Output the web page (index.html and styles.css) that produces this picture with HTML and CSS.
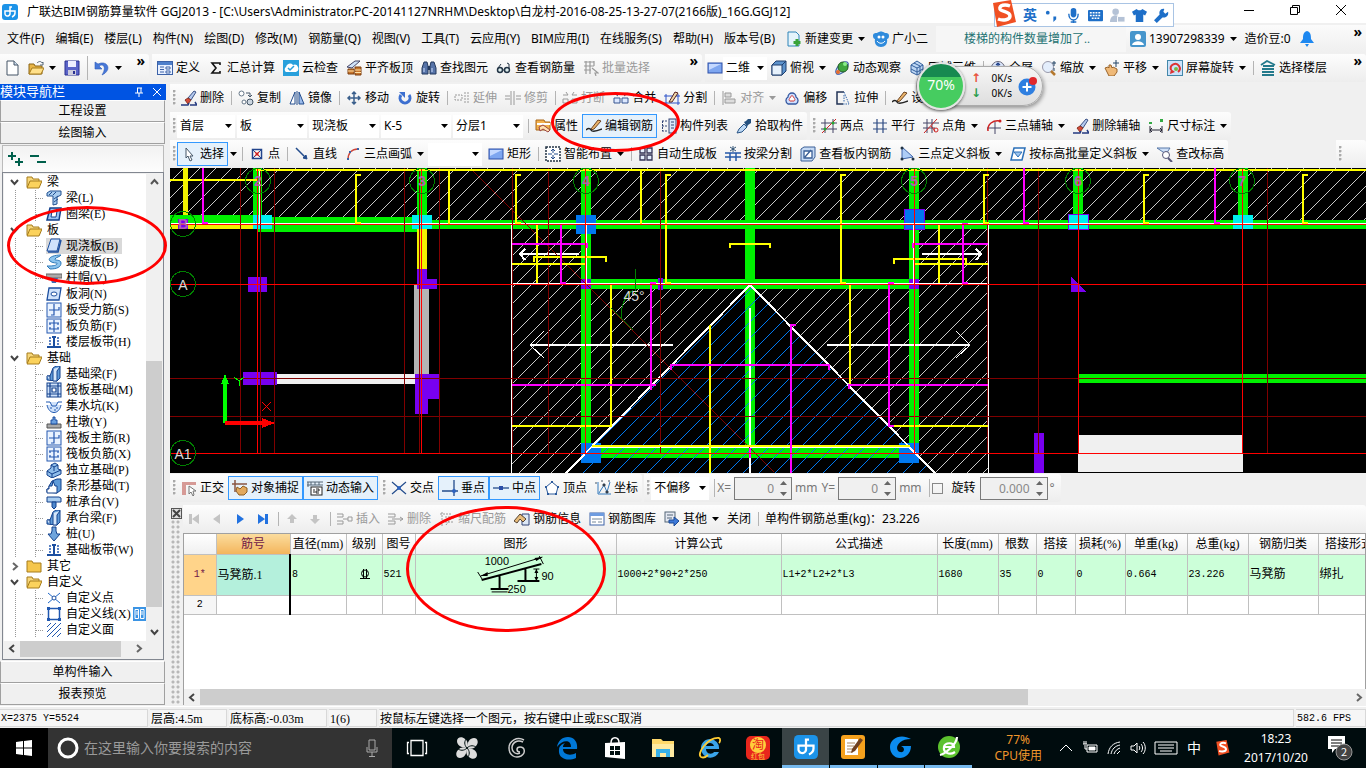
FILE: index.html
```html
<!DOCTYPE html>
<html lang="zh-CN">
<head>
  <meta charset="UTF-8" />
  <meta name="viewport" content="width=device-width, initial-scale=1.0" />
  <title>广联达BIM钢筋算量软件 GGJ2013</title>
  <link rel="stylesheet" href="styles.css">
</head>
<body>

  <!-- icon set -->
  <svg class="sprite" aria-hidden="true">
    <symbol id="logo" viewBox="0 0 16 16"><rect width="16" height="16" rx="3" fill="#1c93e8"/><path d="M10 3H8v7a2.500 2.500 0 0 1-5-1V7h10v2c0 2-1 3-3 4" fill="none" stroke="#fff" stroke-width="1.500"/></symbol>
    <symbol id="caret" viewBox="0 0 7 4"><path d="M0 0h7L3.500 4z" fill="currentColor"/></symbol>
    <symbol id="new" viewBox="0 0 16 16"><path d="M3 1h7l4 4v10H3z" fill="#fff" stroke="#456"/><path d="M10 1v4h4" fill="#cde" stroke="#456"/></symbol>
    <symbol id="open" viewBox="0 0 16 16"><path d="M1 4h5l1 2h7v8H1z" fill="#e8b547" stroke="#8a6516"/><path d="M1 14l3-6h12l-3 6z" fill="#ffe08a" stroke="#a67c1d"/><path d="M9 3c2-2 4-2 5 0l1-1v3h-3" fill="none" stroke="#567"/></symbol>
    <symbol id="save" viewBox="0 0 16 16"><path d="M1 1h14v14H1z" fill="#5a63c8" stroke="#2a3190"/><path d="M4 1h8v6H4z" fill="#eef"/><path d="M4 10h8v5H4z" fill="#ccd"/><path d="M9 11h2v3H9z" fill="#2a3190"/></symbol>
    <symbol id="undo" viewBox="0 0 16 16"><path d="M1 2v7h7L5 6c4-3 8 1 3 9 9-4 7-13-1-12L4 4z" fill="#4878d8" stroke="#2c5bb8" stroke-width=".6"/></symbol>
    <symbol id="define" viewBox="0 0 16 16"><rect x=".5" y="1.500" width="15" height="13" fill="#e8f0ff" stroke="#3c62a8"/><path d="M1 2h14v3H1z" fill="#4f80cc"/><path d="M3 7h4M3 9.500h4M3 12h4M9 7h4v2H9zM9 11h4v2H9z" stroke="#3c62a8" fill="#fff"/></symbol>
    <symbol id="sigma" viewBox="0 0 16 16"><path d="M12 5V3H4l4 5-4 5h8v-2" fill="none" stroke="#111" stroke-width="1.600"/></symbol>
    <symbol id="cloud" viewBox="0 0 16 16"><rect width="16" height="16" fill="#28a0dc"/><path d="M3 12a3 3 0 0 1 0-5 4 4 0 0 1 7-2 3.500 3.500 0 0 1 3 7z" fill="#fff"/><path d="M5 8l2 2 4-4" fill="none" stroke="#28a0dc" stroke-width="1.500"/></symbol>
    <symbol id="align-top" viewBox="0 0 16 16"><path d="M1 7l8-6h5l-8 7z" fill="#cfe2f8" stroke="#446"/><path d="M2 9h6v5H2zM9 7h6v8H9z" fill="#c8762d" stroke="#7c3f10"/><path d="M2 11h6M9 10h6M9 12.500h6" stroke="#ffe2a8"/></symbol>
    <symbol id="find" viewBox="0 0 16 16"><path d="M3 2h3l1 4v8H1V8zM10 2h3l2 6v6H9V6z" fill="#5673a8" stroke="#23395d"/><path d="M7 6h2v4H7z" fill="#23395d"/><path d="M3 8v4M11 8v4" stroke="#cfe0ff"/></symbol>
    <symbol id="glasses" viewBox="0 0 16 16"><circle cx="4" cy="10" r="2.500" fill="#dee" stroke="#234" stroke-width="1.500"/><circle cx="11" cy="10" r="2.500" fill="#dee" stroke="#234" stroke-width="1.500"/><path d="M2 8l3-4M7 10h1M13 9V4l-2-1" fill="none" stroke="#234"/></symbol>
    <symbol id="batch" viewBox="0 0 16 16"><path d="M1 2h10M1 6h10M1 10h7M3 1v13M7 1v13M11 1v5M9 8l6 5-3 0 1 3" fill="none" stroke="currentColor" stroke-width="1.200"/></symbol>
    <symbol id="rect" viewBox="0 0 16 16"><rect x="1" y="3" width="14" height="10" fill="#7ea6f0" stroke="#2c4fa8"/><path d="M2 4h12L2 10z" fill="#c4d8ff"/></symbol>
    <symbol id="cube" viewBox="0 0 16 16"><path d="M1 5l4-4h10v10l-4 4H1z" fill="#5c92cc" stroke="#1d3d6c"/><path d="M1 5h10v10H1z" fill="#e6f1fc" stroke="#1d3d6c"/><path d="M11 5l4-4" stroke="#1d3d6c"/></symbol>
    <symbol id="orbit" viewBox="0 0 16 16"><ellipse cx="8" cy="8" rx="4" ry="8" transform="rotate(45 8 8)" fill="#b8cbe8" stroke="#3358a8"/><circle cx="9" cy="7" r="5" fill="#3fa63f" stroke="#245c24"/><circle cx="11" cy="4" r="2" fill="#8e8"/><circle cx="4" cy="12" r="2" fill="#e66b2c"/></symbol>
    <symbol id="globe" viewBox="0 0 16 16"><path d="M2 5l6-4 6 4v7l-6 3-6-3z" fill="#bcd6f4" stroke="#335f9c"/><path d="M2 5l6 3 6-3M8 8v7M5 3l6 3v7M2 9l6 3 6-3" fill="none" stroke="#335f9c"/></symbol>
    <symbol id="full" viewBox="0 0 16 16"><circle cx="8" cy="8" r="6.500" fill="#dfeaff" stroke="#667"/><path d="M8 3v10M3 8h10M6 5l2-2 2 2M6 11l2 2 2-2" fill="none" stroke="#23448c" stroke-width="1.200"/></symbol>
    <symbol id="zoom" viewBox="0 0 16 16"><circle cx="7" cy="7" r="5.500" fill="#e4eefc" stroke="#99a"/><path d="M10 11l4 4" stroke="#b5782e" stroke-width="2.500"/><path d="M13 1v5M11 3h4M13 8v3" stroke="#246"/></symbol>
    <symbol id="hand" viewBox="0 0 16 16"><path d="M1 8l3-1 1 1V5l2 0 1 3 1-1 2 1 2 1v3l-3 4H5z" fill="#efb978" stroke="#9a642a"/><path d="M12 0v7M9 3h6" stroke="#246"/></symbol>
    <symbol id="screen-rot" viewBox="0 0 16 16"><rect x=".5" y=".5" width="15" height="15" fill="#cce3fb" stroke="#48a"/><path d="M4 10a4.500 4.500 0 1 1 7 2" fill="none" stroke="#d33" stroke-width="2"/><path d="M3 14l1-5 4 3z" fill="#d33"/><circle cx="9" cy="9" r="2" fill="#7b4"/></symbol>
    <symbol id="floors" viewBox="0 0 16 16"><path d="M1 5l6-4 8 4M3 6h11M2 9h12M2 12h12M2 15h12" fill="none" stroke="#247a8c" stroke-width="1.800"/></symbol>
    <symbol id="erase" viewBox="0 0 16 16"><path d="M7 8l6-7 2 1-5 8z" fill="#b4c9ee" stroke="#3b5185"/><path d="M4 10l3-2 3 2-3 4z" fill="#d64b3a" stroke="#832"/><path d="M0 15h7l1-2M9 15h7l-2-3" fill="none" stroke="#243a80" stroke-width="1.500"/></symbol>
    <symbol id="copy" viewBox="0 0 16 16"><circle cx="3.500" cy="3.500" r="2.500" fill="#fff" stroke="#678"/><circle cx="12" cy="12" r="3" fill="#ccd6e0" stroke="#456"/><circle cx="6" cy="12" r="2" fill="#fff" stroke="#678"/><path d="M8 3h4v3M10 5l2 2 2-2" fill="none" stroke="#456"/></symbol>
    <symbol id="mirror" viewBox="0 0 16 16"><path d="M6 2v12H1z" fill="#fff" stroke="#234c8c"/><path d="M8 1v14" stroke="#234c8c"/><path d="M10 2v12h5z" fill="#9cbcec" stroke="#234c8c"/></symbol>
    <symbol id="move" viewBox="0 0 16 16"><path d="M8 2v12M2 8h12M6 4l2-2 2 2M6 12l2 2 2-2M4 6L2 8l2 2M12 6l2 2-2 2" fill="none" stroke="#3a5f8c" stroke-width="1.500"/></symbol>
    <symbol id="rotate" viewBox="0 0 16 16"><path d="M4 5a5 5 0 1 0 8 0" fill="none" stroke="#3c6fd0" stroke-width="3"/><path d="M2 2h6v6z" fill="#3c6fd0"/></symbol>
    <symbol id="extend" viewBox="0 0 16 16"><path d="M1 5h7v5H1zM11 2v12M14 2v12" fill="none" stroke="currentColor" stroke-dasharray="2 1"/></symbol>
    <symbol id="trim" viewBox="0 0 16 16"><path d="M6 1v14M9 1v14M0 6h5M0 9h5M11 6h5M11 9h5" fill="none" stroke="currentColor"/></symbol>
    <symbol id="break" viewBox="0 0 16 16"><path d="M1 5h5l-2-3M15 5h-5l2-3M1 9h5v4H1zM10 9h5v4h-5z" fill="none" stroke="currentColor"/></symbol>
    <symbol id="merge" viewBox="0 0 16 16"><path d="M1 3l4 3M15 3l-4 3M1 8h6v5H1zM9 8h6v5H9z" fill="#dce8ff" stroke="#36558f"/></symbol>
    <symbol id="split" viewBox="0 0 16 16"><path d="M0 6h16M0 13h16M2 4v11M14 4v11" fill="none" stroke="#2d52c8"/><path d="M5 12l6-10 3 1-6 9z" fill="#f0d8a8" stroke="#522"/></symbol>
    <symbol id="align" viewBox="0 0 16 16"><path d="M2 1v14M4 3h6v4H4zM4 9h10v4H4z" fill="#ddd" stroke="currentColor"/></symbol>
    <symbol id="offset" viewBox="0 0 16 16"><path d="M4 14a4 4 0 0 1 0-7 4 4 0 0 1 8 0 4 4 0 0 1 0 7z" fill="#cfe0ff" stroke="#3558a0" stroke-width="1.300"/><path d="M6 11c-2-1 0-3 0-3 1-3 3-3 4 0 0 0 2 2 0 3z" fill="#fff" stroke="#c33"/></symbol>
    <symbol id="stretch" viewBox="0 0 16 16"><path d="M9 2H2v12h6" fill="none" stroke="#235" stroke-width="1.500"/><path d="M9 2l5 12H8M9 5v7" fill="none" stroke="#36a" stroke-dasharray="1.500 1"/></symbol>
    <symbol id="pen" viewBox="0 0 16 16"><path d="M5 11l7-9 3 1-7 8-3 1z" fill="#e9b36a" stroke="#6b4322"/><path d="M0 12c2-2 4-2 5 0s6 1 11-1" fill="none" stroke="#222" stroke-width="1.500"/></symbol>
    <symbol id="prop" viewBox="0 0 16 16"><path d="M1 2h8l1 2h5v8H1z" fill="#f3b14c" stroke="#a8671b"/><path d="M2 6h13" stroke="#fff" stroke-width="2"/><path d="M4 9l4-2 3 2 4 3-2 2-5-3-3 2z" fill="#ffdfae" stroke="#944"/></symbol>
    <symbol id="list" viewBox="0 0 16 16"><path d="M1 3h5M1 8h5M1 13h5M1.500 3v10" stroke="#347" stroke-dasharray="2 1"/><rect x="8" y="1" width="7" height="14" fill="#dbe8fb" stroke="#347"/><path d="M10 4h3M10 7h3M10 10h3" stroke="#347"/></symbol>
    <symbol id="pick" viewBox="0 0 16 16"><path d="M1 15l2-4 5-5 3 3-5 5z" fill="#bcd8f4" stroke="#2a5586"/><path d="M8 4l2-1 2-2h3v4l-3 2-1 2z" fill="#24507e"/></symbol>
    <symbol id="axis-two" viewBox="0 0 16 16"><path d="M4 1v14M12 1v14M0 5h16M0 11h16" stroke="#446"/><path d="M1 15L15 1" stroke="#c22"/><circle cx="4" cy="11" r="1.500" fill="#2a3"/><circle cx="12" cy="5" r="1.500" fill="#2a3"/></symbol>
    <symbol id="axis-par" viewBox="0 0 16 16"><path d="M5 1v14M11 1v14M1 5h14M1 11h14" stroke="#2d4a82" stroke-width="1.200"/></symbol>
    <symbol id="axis-ang" viewBox="0 0 16 16"><path d="M4 1v14M9 1v14M0 5h16M0 10h12" stroke="#446"/><path d="M1 15L14 1M8 8l4 5" stroke="#c22"/><circle cx="13" cy="12" r="2" fill="none" stroke="#c22"/></symbol>
    <symbol id="axis-3" viewBox="0 0 16 16"><path d="M9 4v12M1 10h14" stroke="#446"/><path d="M2 13C1 6 7 2 14 3" fill="none" stroke="#c22" stroke-width="1.500"/><circle cx="14" cy="3" r="1.500" fill="#c22"/></symbol>
    <symbol id="dim" viewBox="0 0 16 16"><path d="M2 8v7M14 8v7M2 12h12M4 10l-2 2 2 2M12 10l2 2-2 2" fill="none" stroke="#223"/><path d="M1 4h3v2H1zM12 1h3v3h-3z" fill="#3a4"/></symbol>
    <symbol id="cursor" viewBox="0 0 16 16"><path d="M5 2v10l2-2 2 5 2-1-2-4h3z" fill="#fff" stroke="#456"/></symbol>
    <symbol id="point" viewBox="0 0 16 16"><rect x="3.500" y="3.500" width="9" height="9" fill="#fff" stroke="#23448c" stroke-width="1.500"/><path d="M4 4l8 8M12 4l-8 8" stroke="#23448c"/><path d="M6 6l4 4M10 6l-4 4" stroke="#c22" stroke-width="1.500"/></symbol>
    <symbol id="line" viewBox="0 0 16 16"><path d="M2 2l10 10" stroke="#234c8c" stroke-width="1.500"/><path d="M13 13l-4-1 3-3z" fill="#234c8c" stroke="#234c8c"/></symbol>
    <symbol id="arc" viewBox="0 0 16 16"><path d="M3 14C3 7 7 3 13 3" fill="none" stroke="#cc4438" stroke-width="1.500"/><path d="M2 12h2v2H2zM12 2h2v2h-2zM4 5h2v2H4z" fill="#3c62a8"/></symbol>
    <symbol id="smart" viewBox="0 0 16 16"><rect x="1" y="1" width="14" height="14" fill="#fff" stroke="#234" stroke-width="1.500" stroke-dasharray="2 1"/><path d="M8 3v4M8 9v4M3 8h4M9 8h4M6 5l2-2 2 2M6 11l2 2 2-2" fill="none" stroke="#234c8c"/></symbol>
    <symbol id="auto" viewBox="0 0 16 16"><path d="M2 2h5v5H2zM9 2h5v5H9zM2 9h5v5H2zM9 9h5v5H9z" fill="#e4eefc" stroke="#335" stroke-width="1.300"/></symbol>
    <symbol id="beam-split" viewBox="0 0 16 16"><path d="M0 7h16M0 11h16M5 7v8M11 7v8" stroke="#2458a8" stroke-width="1.500"/><path d="M5 1l6 4M11 1L5 5M8 0v6" stroke="#357"/></symbol>
    <symbol id="see-bar" viewBox="0 0 16 16"><path d="M1 3l3-2h11v10l-3 4H1z" fill="#c6daf4" stroke="#3a5f96"/><path d="M4 5h8v7H4zM5 11l6-7" fill="#fff" stroke="#3a5f96" stroke-width="1.300"/></symbol>
    <symbol id="slope" viewBox="0 0 16 16"><path d="M3 1v12l11-2z" fill="#aecdf6" stroke="#3c62a8"/><circle cx="3" cy="2" r="1.500" fill="#234"/><circle cx="3" cy="13" r="1.500" fill="#234"/><circle cx="14" cy="13" r="1.500" fill="#234"/></symbol>
    <symbol id="level" viewBox="0 0 16 16"><path d="M4 2h11l-3 12H1z" fill="#fff" stroke="#2a6fb8" stroke-width="1.500"/><path d="M4 6h8l-4 5z" fill="#9cc4ee" stroke="#2a6fb8"/></symbol>
    <symbol id="level-find" viewBox="0 0 16 16"><path d="M0 2h13l-4 6z" fill="#cfe0f8" stroke="#5878a8"/><circle cx="9" cy="9" r="3.500" fill="#fff" stroke="#557"/><path d="M11 12l4 4" stroke="#557" stroke-width="2"/></symbol>
    <symbol id="ortho" viewBox="0 0 16 16"><path d="M1 2h14v3H5v10H1z" fill="#d69a96"/><path d="M8 6v8l2-2 2 4 1-1-1-4h3z" fill="#fff" stroke="#777"/></symbol>
    <symbol id="snap" viewBox="0 0 16 16"><path d="M3 0v12M0 4h15" stroke="#854" stroke-width="1.500"/><path d="M5 7l3 2 3-3 4 2v4l-3 3H7l-3-4z" fill="#e2a95d" stroke="#8b5c24"/></symbol>
    <symbol id="dyn" viewBox="0 0 16 16"><path d="M0 2h16M0 5h16M1 2v5M4 2v3M8 2v3M12 2v3" stroke="#567"/><rect x="4" y="7" width="11" height="8" fill="#fff" stroke="#222"/><path d="M7 9v4M9 9h3v2H9v2h3" fill="none" stroke="#222"/></symbol>
    <symbol id="cross" viewBox="0 0 16 16"><path d="M1 2l14 12M15 2L1 14" stroke="#234c8c" stroke-width="1.200"/><circle cx="8" cy="8" r="2" fill="#2c62c0"/></symbol>
    <symbol id="perp" viewBox="0 0 16 16"><path d="M0 11h16M12 0v16" stroke="#234c8c" stroke-width="1.300"/><circle cx="12" cy="11" r="2" fill="#2c62c0"/></symbol>
    <symbol id="mid" viewBox="0 0 16 16"><path d="M0 8h16" stroke="#234c8c" stroke-width="1.300"/><path d="M6 6h4v4H6z" fill="#2c4fa8"/></symbol>
    <symbol id="penta" viewBox="0 0 16 16"><path d="M8 2l6 5-2 7H4L2 7z" fill="#fff" stroke="#2c5a9c"/><path d="M7 1h2v2H7zM13 6h2v2h-2zM11 13h2v2h-2zM3 13h2v2H3zM1 6h2v2H1z" fill="#2c5a9c"/></symbol>
    <symbol id="coord" viewBox="0 0 16 16"><path d="M3 2v12h13M4 13l5-8 3 7 3-10" fill="none" stroke="#357abd"/><path d="M0 3h2M6 1h2M13 1h2M8 4h2v2H8zM11 11h2v2h-2z" stroke="#456"/></symbol>
    <symbol id="first" viewBox="0 0 16 16"><path d="M3 3h3v10H3zM13 3v10L6 8z" fill="currentColor"/></symbol>
    <symbol id="prev" viewBox="0 0 16 16"><path d="M11 3v10L4 8z" fill="currentColor"/></symbol>
    <symbol id="next" viewBox="0 0 16 16"><path d="M5 3v10l7-5z" fill="#2272e0"/></symbol>
    <symbol id="last" viewBox="0 0 16 16"><path d="M10 3h3v10h-3zM3 3v10l7-5z" fill="#2272e0"/></symbol>
    <symbol id="up" viewBox="0 0 16 16"><path d="M8 3l5 5h-3v4H6V8H3z" fill="currentColor"/></symbol>
    <symbol id="down" viewBox="0 0 16 16"><path d="M8 13l5-5h-3V4H6v4H3z" fill="currentColor"/></symbol>
    <symbol id="row-ins" viewBox="0 0 16 16"><path d="M0 3h6v3H0M0 10h6v3H0M15 6h-4v4h4zM11 8H6" fill="none" stroke="currentColor"/></symbol>
    <symbol id="row-del" viewBox="0 0 16 16"><path d="M0 3h7v3H0M0 10h7v3H0M4 8h11M12 6l3 2-3 2" fill="none" stroke="currentColor"/></symbol>
    <symbol id="scale" viewBox="0 0 16 16"><path d="M1 3h12M3 1v14M6 6h8v2M7 14l6-8M6 11h9" fill="none" stroke="currentColor" stroke-dasharray="2 1"/></symbol>
    <symbol id="info" viewBox="0 0 16 16"><path d="M8 3h7v11H8z" fill="#dde8f6" stroke="#347"/><path d="M0 10l6-7 6 5-3 3-3-3-3 4z" fill="#e8bc7a" stroke="#543"/></symbol>
    <symbol id="gallery" viewBox="0 0 16 16"><rect x="1" y="2" width="14" height="12" fill="#fff" stroke="#3c62a8"/><path d="M1 2h14v3H1z" fill="#6f9ce0"/><path d="M3 8h10M3 11h4M9 11h4" stroke="#789"/></symbol>
    <symbol id="other" viewBox="0 0 16 16"><rect x="1" y="1" width="10" height="10" fill="#e5e9f2" stroke="#567"/><path d="M3 4h6M3 7h5" stroke="#567"/><path d="M5 9h5V6l5 4-5 5v-3H5z" fill="#3c78d8" stroke="#1c4a94"/></symbol>
    <symbol id="doc-plus" viewBox="0 0 16 16"><path d="M2 1h8l3 3v11H2z" fill="#e4f3fb" stroke="#2f84b8"/><path d="M11 8v7M7.500 11.500h7" stroke="#39a339" stroke-width="3"/></symbol>
    <symbol id="mascot" viewBox="0 0 16 16"><path d="M0 5c0-3 2-3 4-3 3-2 5-2 8 0 2 0 4 0 4 3 0 2-1 3-2 3 1 5-2 8-6 8s-7-3-6-8C1 8 0 7 0 5z" fill="#2f8bdc"/><circle cx="6" cy="6" r="1.500" fill="#fff"/><circle cx="10" cy="6" r="1.500" fill="#fff"/><path d="M4 10c2 3 6 3 8 0" fill="none" stroke="#fff"/></symbol>
    <symbol id="user" viewBox="0 0 16 16"><rect width="16" height="16" rx="2" fill="#4796cc"/><circle cx="8" cy="6" r="3" fill="#fff"/><path d="M2 14c1-5 11-5 12 0z" fill="#fff"/></symbol>
    <symbol id="bell" viewBox="0 0 16 16"><path d="M8 0c4 1 4 5 4 8l3 4H1l3-4c0-3 0-7 4-8z" fill="#1e88f0"/><path d="M6 13h4l-2 3z" fill="#1e88f0"/></symbol>
    <!-- tree icons -->
    <symbol id="chev-d" viewBox="0 0 9 9"><path d="M1 2l3.500 4L8 2" fill="none" stroke="#444" stroke-width="2"/></symbol>
    <symbol id="chev-u" viewBox="0 0 9 9"><path d="M1 7l3.500-4L8 7" fill="none" stroke="#555" stroke-width="2"/></symbol>
    <symbol id="chev-r" viewBox="0 0 9 9"><path d="M3 1l4 3.500L3 8" fill="none" stroke="#666" stroke-width="2"/></symbol>
    <symbol id="chev-l" viewBox="0 0 9 9"><path d="M6 1L2 4.500 6 8" fill="none" stroke="#444" stroke-width="2"/></symbol>
    <symbol id="folder" viewBox="0 0 16 16"><path d="M1 3h5l1 2h8v9H1z" fill="#f5c64c" stroke="#a67c1d"/></symbol>
    <symbol id="folder-open" viewBox="0 0 16 16"><path d="M1 3h5l1 2h6v8H1z" fill="#f7d77a" stroke="#a67c1d"/><path d="M1 14l3-7h12l-3 7z" fill="#fbd25c" stroke="#a67c1d"/></symbol>
    <symbol id="t-beam" viewBox="0 0 16 16"><path d="M1 3l3-2h11v4l-4 2v7l-4 1V6H1z" fill="#a9cdf0" stroke="#205090"/><path d="M3 5l3-3M7 5l3-3M8 9l4-3M8 12l4-3" stroke="#205090"/></symbol>
    <symbol id="t-ring" viewBox="0 0 16 16"><path d="M4 2h11l-2 12H1z" fill="#9cc4f4" stroke="#12408c" stroke-width="1.500"/><path d="M6 5h5l-1 6H5z" fill="#fff" stroke="#12408c"/></symbol>
    <symbol id="t-slab" viewBox="0 0 16 16"><path d="M5 1h9l-3 12H1z" fill="#cfe2fb" stroke="#1c4fa0"/><path d="M2 14h10l3-12" fill="none" stroke="#1c4fa0" stroke-width="1.500"/></symbol>
    <symbol id="t-spiral" viewBox="0 0 16 16"><path d="M15 1C7 1 1 4 4 7s8 1 7 3-6 2-10 2l3 3c7 0 11-2 11-6S8 7 9 5s5-2 6-4z" fill="#8cc4ee" stroke="#2b77b8"/></symbol>
    <symbol id="t-cap" viewBox="0 0 16 16"><path d="M0 4h16v4H0z" fill="#aaa" stroke="#666"/><path d="M4 8h8l-2 5H6z" fill="#3b6fb8"/></symbol>
    <symbol id="t-hole" viewBox="0 0 16 16"><path d="M3 2h12l-2 12H1z" fill="#cfe2fb" stroke="#1c4fa0" stroke-width="1.300"/><ellipse cx="8" cy="8" rx="3" ry="2" fill="#fff" stroke="#1c4fa0"/></symbol>
    <symbol id="t-main" viewBox="0 0 16 16"><rect x="1" y="1" width="14" height="14" fill="#eaf3ff" stroke="#2558b0"/><path d="M8 2v11H5M3 8h10V5" fill="none" stroke="#2558b0" stroke-width="1.200"/></symbol>
    <symbol id="t-neg" viewBox="0 0 16 16"><rect x="1" y="1" width="14" height="14" fill="#eaf3ff" stroke="#2558b0"/><path d="M3 5h10M3 11h10M8 2v12M4 5v2M12 5v2M4 11V9M12 11V9" fill="none" stroke="#2558b0" stroke-width="1.200"/></symbol>
    <symbol id="t-band" viewBox="0 0 16 16"><path d="M4 3v9M12 3v9" stroke="#2558b0" stroke-width="1.500" stroke-dasharray="2 1"/><path d="M8 3v9M6 3h4M1 13h14" stroke="#1c4fa0" stroke-width="2"/></symbol>
    <symbol id="t-fbeam" viewBox="0 0 16 16"><path d="M1 14v-4h3l3-8 3-2h4v12l-3 3z" fill="#5f9bd8" stroke="#12408c"/><path d="M1 10h3v5M7 3v12h4V5l3-4" fill="#d5e7fa" stroke="#12408c"/></symbol>
    <symbol id="t-raft" viewBox="0 0 16 16"><rect x="1" y="1" width="14" height="14" fill="#cfe2fb" stroke="#12408c"/><path d="M4 1v14M12 1v14M1 4h14M1 12h14M6 6h4v4H6z" fill="#fff" stroke="#12408c" stroke-width="1.200"/></symbol>
    <symbol id="t-pit" viewBox="0 0 16 16"><path d="M0 4h4l2 4h4l2-4h4M1 7c2 10 12 10 14 0" fill="#cfe2fb" stroke="#2058b0"/><path d="M4 10h2M8 12h2M10 10h2" stroke="#2058b0"/></symbol>
    <symbol id="t-pier" viewBox="0 0 16 16"><path d="M1 10h14v4H1z" fill="#aaa" stroke="#555"/><path d="M5 10V6h2V3h2v3h2v4z" fill="#6aa0e0" stroke="#1c4fa0"/></symbol>
    <symbol id="t-iso" viewBox="0 0 16 16"><path d="M1 9l4-3V3l4-2 3 2v4l3 1v4l-9 4-5-3z" fill="#8fbdea" stroke="#12408c"/><path d="M1 9l5 3 9-4M6 12v4M5 3l3 2 4-2M8 5v4" fill="none" stroke="#12408c"/></symbol>
    <symbol id="t-strip" viewBox="0 0 16 16"><path d="M1 14v-3h2V8l3-5 5-2h4v11l-4 3z" fill="#5f9bd8" stroke="#12408c"/><path d="M1 15v-4h2V8h3l1-5 2 5h2v7z" fill="#fff" stroke="#12408c"/></symbol>
    <symbol id="t-pcap" viewBox="0 0 16 16"><path d="M1 3h12l2 1v4H1z" fill="#a9cdf0" stroke="#12408c"/><path d="M6 8h4v5l-2 2-2-2z" fill="#4f88cc" stroke="#12408c"/></symbol>
    <symbol id="t-pile" viewBox="0 0 16 16"><path d="M6 1h4v4l1 3h3l-6 7-6-7h3l1-3z" fill="#6fa4dc" stroke="#12408c"/></symbol>
    <symbol id="t-cpoint" viewBox="0 0 16 16"><path d="M2 3l12 10M14 3L2 13" stroke="#2068c8"/><circle cx="8" cy="8" r="2" fill="#fff" stroke="#1c4fa0"/></symbol>
    <symbol id="t-cline" viewBox="0 0 16 16"><rect x="2.500" y="2.500" width="11" height="11" fill="#fff" stroke="#2058b0" stroke-width="1.500"/><path d="M1 1h3v3H1zM12 1h3v3h-3zM1 12h3v3H1zM12 12h3v3h-3z" fill="#2058b0"/></symbol>
    <symbol id="t-cface" viewBox="0 0 16 16"><path d="M1 5l4-4M1 10l9-9M1 15L15 1M6 15l9-9M11 15l4-4" stroke="#2058b0"/></symbol>
    <symbol id="sogou" viewBox="0 0 28 28"><path d="M4 3l18-3 5 22-19 5z" fill="#f05023"/><path d="M21 6c-5-2-11-1-10 3 1 3 10 2 10 7 0 4-7 5-12 3" fill="none" stroke="#fff" stroke-width="3.500"/></symbol>
  </svg>

  <header class="titlebar">
    <svg class="ic"><use href="#logo"/></svg>
    <h1>广联达BIM钢筋算量软件 GGJ2013 - [C:\Users\Administrator.PC-20141127NRHM\Desktop\白龙村-2016-08-25-13-27-07(2166版)_16G.GGJ12]</h1>
    <div class="win-buttons">
      <button aria-label="最小化"><svg viewBox="0 0 12 12"><path d="M1 6.500h10"/></svg></button>
      <button aria-label="还原"><svg viewBox="0 0 12 12"><path d="M1.500 3.500h7v7h-7zM3.500 3V1.500h7v7H9"/></svg></button>
      <button aria-label="关闭"><svg viewBox="0 0 12 12"><path d="M1 1l10 10M11 1L1 11"/></svg></button>
    </div>
  </header>

  <nav class="menubar">
    <div class="menus">
      <button>文件(F)</button><button>编辑(E)</button><button>楼层(L)</button><button>构件(N)</button>
      <button>绘图(D)</button><button>修改(M)</button><button>钢筋量(Q)</button><button>视图(V)</button>
      <button>工具(T)</button><button>云应用(Y)</button><button>BIM应用(I)</button><button>在线服务(S)</button>
      <button>帮助(H)</button><button>版本号(B)</button>
    </div>
    <button class="tool"><svg class="ic"><use href="#doc-plus"/></svg>新建变更<svg class="caret"><use href="#caret"/></svg></button>
    <button class="tool"><svg class="ic"><use href="#mascot"/></svg>广小二</button>
    <a class="news" href="#">楼梯的构件数量增加了..</a>
    <div class="account">
      <button class="tool"><svg class="ic"><use href="#user"/></svg>13907298339<svg class="caret"><use href="#caret"/></svg></button>
      <button class="tool">造价豆:0</button>
      <button class="tool" aria-label="通知"><svg class="ic"><use href="#bell"/></svg></button>
      <span class="more">»</span>
    </div>
  </nav>

  <div class="toolbar-row top-tools">
    <div class="bar bar-file">
      <button class="tool" aria-label="新建"><svg class="ic"><use href="#new"/></svg></button>
      <button class="tool" aria-label="打开"><svg class="ic"><use href="#open"/></svg><svg class="caret"><use href="#caret"/></svg></button>
      <button class="tool" aria-label="保存"><svg class="ic"><use href="#save"/></svg></button>
      <i class="sep tall"></i>
      <button class="tool" aria-label="撤销"><svg class="ic"><use href="#undo"/></svg><svg class="caret"><use href="#caret"/></svg></button>
      <span class="more">»</span>
    </div>
    <div class="bar bar-main">
      <button class="tool"><svg class="ic"><use href="#define"/></svg>定义</button>
      <button class="tool"><svg class="ic"><use href="#sigma"/></svg>汇总计算</button>
      <button class="tool"><svg class="ic"><use href="#cloud"/></svg>云检查</button>
      <button class="tool"><svg class="ic"><use href="#align-top"/></svg>平齐板顶</button>
      <button class="tool"><svg class="ic"><use href="#find"/></svg>查找图元</button>
      <button class="tool"><svg class="ic"><use href="#glasses"/></svg>查看钢筋量</button>
      <button class="tool" disabled><svg class="ic"><use href="#batch"/></svg>批量选择</button>
      <span class="more">»</span>
    </div>
    <div class="bar bar-view">
      <label class="combo-icon"><svg class="ic"><use href="#rect"/></svg><select class="combo w-dim" aria-label="视图维度"><option>二维</option></select></label>
      <button class="tool"><svg class="ic"><use href="#cube"/></svg>俯视<svg class="caret"><use href="#caret"/></svg></button>
      <button class="tool"><svg class="ic"><use href="#orbit"/></svg>动态观察</button>
      <button class="tool"><svg class="ic"><use href="#globe"/></svg>区域三维</button>
      <i class="sep"></i>
      <button class="tool"><svg class="ic"><use href="#full"/></svg>全屏</button>
      <button class="tool"><svg class="ic"><use href="#zoom"/></svg>缩放<svg class="caret"><use href="#caret"/></svg></button>
      <button class="tool"><svg class="ic"><use href="#hand"/></svg>平移<svg class="caret"><use href="#caret"/></svg></button>
      <button class="tool"><svg class="ic"><use href="#screen-rot"/></svg>屏幕旋转<svg class="caret"><use href="#caret"/></svg></button>
      <i class="sep"></i>
      <button class="tool"><svg class="ic"><use href="#floors"/></svg>选择楼层</button>
      <span class="more">»</span>
    </div>
  </div>

  <div class="workspace">
    <aside class="sidebar">
      <div class="side-title">
        <h2>模块导航栏</h2>
        <button aria-label="固定"><svg viewBox="0 0 10 10"><path d="M3 1h5M3.500 1v5M7 1v5M1 6h8M5 6v4"/></svg></button>
        <button aria-label="关闭"><svg viewBox="0 0 10 10"><path d="M1 1l8 8M9 1L1 9"/></svg></button>
      </div>
      <button class="side-btn">工程设置</button>
      <button class="side-btn">绘图输入</button>
      <div class="tree-tools">
        <button aria-label="全部展开"><svg viewBox="0 0 18 16"><path d="M1 5h8M5 1v8M8 11h8M12 7v8"/></svg></button>
        <button aria-label="全部折叠"><svg viewBox="0 0 18 16"><path d="M1 5h9M8 11h9"/></svg></button>
      </div>
      <div class="tree-box">
        <div class="tree-main">
          <ul class="tree">
            <li><button class="group"><svg class="chev"><use href="#chev-d"/></svg><svg class="ic"><use href="#folder-open"/></svg>梁</button>
              <ul>
                <li><svg class="ic"><use href="#t-beam"/></svg><a href="#">梁(L)</a></li>
                <li><svg class="ic"><use href="#t-ring"/></svg><a href="#">圈梁(E)</a></li>
              </ul>
            </li>
            <li><button class="group"><svg class="chev"><use href="#chev-d"/></svg><svg class="ic"><use href="#folder-open"/></svg>板</button>
              <ul>
                <li class="selected"><svg class="ic"><use href="#t-slab"/></svg><a href="#">现浇板(B)</a></li>
                <li><svg class="ic"><use href="#t-spiral"/></svg><a href="#">螺旋板(B)</a></li>
                <li><svg class="ic"><use href="#t-cap"/></svg><a href="#">柱帽(V)</a></li>
                <li><svg class="ic"><use href="#t-hole"/></svg><a href="#">板洞(N)</a></li>
                <li><svg class="ic"><use href="#t-main"/></svg><a href="#">板受力筋(S)</a></li>
                <li><svg class="ic"><use href="#t-neg"/></svg><a href="#">板负筋(F)</a></li>
                <li><svg class="ic"><use href="#t-band"/></svg><a href="#">楼层板带(H)</a></li>
              </ul>
            </li>
            <li><button class="group"><svg class="chev"><use href="#chev-d"/></svg><svg class="ic"><use href="#folder-open"/></svg>基础</button>
              <ul>
                <li><svg class="ic"><use href="#t-fbeam"/></svg><a href="#">基础梁(F)</a></li>
                <li><svg class="ic"><use href="#t-raft"/></svg><a href="#">筏板基础(M)</a></li>
                <li><svg class="ic"><use href="#t-pit"/></svg><a href="#">集水坑(K)</a></li>
                <li><svg class="ic"><use href="#t-pier"/></svg><a href="#">柱墩(Y)</a></li>
                <li><svg class="ic"><use href="#t-main"/></svg><a href="#">筏板主筋(R)</a></li>
                <li><svg class="ic"><use href="#t-neg"/></svg><a href="#">筏板负筋(X)</a></li>
                <li><svg class="ic"><use href="#t-iso"/></svg><a href="#">独立基础(P)</a></li>
                <li><svg class="ic"><use href="#t-strip"/></svg><a href="#">条形基础(T)</a></li>
                <li><svg class="ic"><use href="#t-pcap"/></svg><a href="#">桩承台(V)</a></li>
                <li><svg class="ic"><use href="#t-fbeam"/></svg><a href="#">承台梁(F)</a></li>
                <li><svg class="ic"><use href="#t-pile"/></svg><a href="#">桩(U)</a></li>
                <li><svg class="ic"><use href="#t-band"/></svg><a href="#">基础板带(W)</a></li>
              </ul>
            </li>
            <li><button class="group"><svg class="chev"><use href="#chev-r"/></svg><svg class="ic"><use href="#folder"/></svg>其它</button></li>
            <li><button class="group"><svg class="chev"><use href="#chev-d"/></svg><svg class="ic"><use href="#folder-open"/></svg>自定义</button>
              <ul>
                <li><svg class="ic"><use href="#t-cpoint"/></svg><a href="#">自定义点</a></li>
                <li><svg class="ic"><use href="#t-cline"/></svg><a href="#">自定义线(X)</a><svg class="book" viewBox="0 0 13 14"><rect width="13" height="14" fill="#3b94e4"/><path d="M2 2.500h3.500v9H2zM7.500 2.500H11v9H7.500zM3 5h2M3 7h2M8 5h2M8 7h2" fill="none" stroke="#fff"/></svg></li>
                <li><svg class="ic"><use href="#t-cface"/></svg><a href="#">自定义面</a></li>
              </ul>
            </li>
          </ul>
          <div class="vscroll">
            <button aria-label="向上"><svg class="chev"><use href="#chev-u"/></svg></button>
            <div class="track"><div class="thumb"></div></div>
            <button aria-label="向下"><svg class="chev"><use href="#chev-d"/></svg></button>
          </div>
        </div>
        <div class="hscroll tree-hscroll">
          <button aria-label="向左"><svg class="chev"><use href="#chev-l"/></svg></button>
          <div class="track"><div class="thumb"></div></div>
          <button aria-label="向右"><svg class="chev"><use href="#chev-r"/></svg></button>
        </div>
      </div>
      <button class="side-btn">单构件输入</button>
      <button class="side-btn">报表预览</button>
    </aside>

    <main class="main">
      <div class="toolbar-row">
        <div class="bar">
          <i class="grip"></i>
          <button class="tool"><svg class="ic"><use href="#erase"/></svg>删除</button>
          <i class="sep"></i>
          <button class="tool"><svg class="ic"><use href="#copy"/></svg>复制</button>
          <button class="tool"><svg class="ic"><use href="#mirror"/></svg>镜像</button>
          <i class="sep"></i>
          <button class="tool"><svg class="ic"><use href="#move"/></svg>移动</button>
          <button class="tool"><svg class="ic"><use href="#rotate"/></svg>旋转</button>
          <i class="sep"></i>
          <button class="tool" disabled><svg class="ic"><use href="#extend"/></svg>延伸</button>
          <button class="tool" disabled><svg class="ic"><use href="#trim"/></svg>修剪</button>
          <i class="sep"></i>
          <button class="tool" disabled><svg class="ic"><use href="#break"/></svg>打断</button>
          <button class="tool"><svg class="ic"><use href="#merge"/></svg>合并</button>
          <button class="tool"><svg class="ic"><use href="#split"/></svg>分割</button>
          <i class="sep"></i>
          <button class="tool" disabled><svg class="ic"><use href="#align"/></svg>对齐<svg class="caret"><use href="#caret"/></svg></button>
          <button class="tool"><svg class="ic"><use href="#offset"/></svg>偏移</button>
          <button class="tool"><svg class="ic"><use href="#stretch"/></svg>拉伸</button>
          <i class="sep"></i>
          <button class="tool"><svg class="ic"><use href="#pen"/></svg>设置</button>
        </div>
      </div>

      <div class="toolbar-row">
        <div class="bar">
          <i class="grip"></i>
          <select class="combo w-floor" aria-label="楼层"><option>首层</option></select>
          <select class="combo" aria-label="构件类型"><option>板</option></select>
          <select class="combo" aria-label="构件"><option>现浇板</option></select>
          <select class="combo" aria-label="名称"><option>K-5</option></select>
          <select class="combo" aria-label="分层"><option>分层1</option></select>
          <i class="sep"></i>
          <button class="tool"><svg class="ic"><use href="#prop"/></svg>属性</button>
          <button class="tool on"><svg class="ic"><use href="#pen"/></svg>编辑钢筋</button>
          <button class="tool"><svg class="ic"><use href="#list"/></svg>构件列表</button>
          <button class="tool"><svg class="ic"><use href="#pick"/></svg>拾取构件</button>
        </div>
        <div class="bar">
          <i class="grip"></i>
          <button class="tool"><svg class="ic"><use href="#axis-two"/></svg>两点</button>
          <button class="tool"><svg class="ic"><use href="#axis-par"/></svg>平行</button>
          <button class="tool"><svg class="ic"><use href="#axis-ang"/></svg>点角<svg class="caret"><use href="#caret"/></svg></button>
          <button class="tool"><svg class="ic"><use href="#axis-3"/></svg>三点辅轴<svg class="caret"><use href="#caret"/></svg></button>
          <button class="tool"><svg class="ic"><use href="#erase"/></svg>删除辅轴</button>
          <button class="tool"><svg class="ic"><use href="#dim"/></svg>尺寸标注<svg class="caret"><use href="#caret"/></svg></button>
        </div>
      </div>

      <div class="toolbar-row">
        <div class="bar">
          <i class="grip"></i>
          <button class="tool on"><svg class="ic"><use href="#cursor"/></svg>选择</button>
          <button class="drop" aria-label="选择方式"><svg class="caret"><use href="#caret"/></svg></button>
          <i class="sep"></i>
          <button class="tool"><svg class="ic"><use href="#point"/></svg>点</button>
          <i class="sep"></i>
          <button class="tool"><svg class="ic"><use href="#line"/></svg>直线</button>
          <button class="tool"><svg class="ic"><use href="#arc"/></svg>三点画弧<svg class="caret"><use href="#caret"/></svg></button>
          <select class="combo w-arc" aria-label="弧参数"><option></option></select>
          <button class="tool"><svg class="ic"><use href="#rect"/></svg>矩形</button>
          <i class="sep"></i>
          <button class="tool"><svg class="ic"><use href="#smart"/></svg>智能布置<svg class="caret"><use href="#caret"/></svg></button>
          <i class="sep"></i>
          <button class="tool"><svg class="ic"><use href="#auto"/></svg>自动生成板</button>
          <button class="tool"><svg class="ic"><use href="#beam-split"/></svg>按梁分割</button>
          <button class="tool"><svg class="ic"><use href="#see-bar"/></svg>查看板内钢筋</button>
          <button class="tool"><svg class="ic"><use href="#slope"/></svg>三点定义斜板<svg class="caret"><use href="#caret"/></svg></button>
          <button class="tool"><svg class="ic"><use href="#level"/></svg>按标高批量定义斜板<svg class="caret"><use href="#caret"/></svg></button>
          <button class="tool"><svg class="ic"><use href="#level-find"/></svg>查改标高</button>
        </div>
        <div class="bar bar-end"><i class="grip"></i></div>
      </div>

      <svg class="drawing" viewBox="170 168 1196 305" preserveAspectRatio="xMinYMin slice" role="img" aria-label="现浇板平面图">
        <defs>
          <pattern id="hatch" width="16" height="16" patternUnits="userSpaceOnUse"><path d="M-1 17L17-1" stroke="#c8c8c8"/></pattern>
          <pattern id="hatch-blue" width="16" height="16" patternUnits="userSpaceOnUse"><path d="M-1 17L17-1" stroke="#0078f0" stroke-width="1.400"/></pattern>
        </defs>
        <rect x="170" y="168" width="1196" height="305" fill="#000"/>
        <path d="M170 168h1196v52H170zM512 229h74v55h-74zM914 229h74v55h-74zM512 285h238L566 473h-54zM750 285h238v188h-53z" fill="url(#hatch)"/>
        <!-- beams and walls -->
        <g fill="#00f000">
          <path d="M170 215h92v9h-92zM257 217h165v15H257zM427 220h939v9H427zM253 168h9v50h-9zM417 168h10v50h-10z"/>
          <path d="M581 168h10v290h-10zM745 168h10v290h-10zM909 168h10v290h-10zM581 279h338v10H581zM591 448h318v10H591z"/>
          <path d="M1073 168h10v50h-10zM1238 168h10v50h-10zM1079 374h287v9h-287z"/>
        </g>
        <path d="M750 285l184 188H566z" fill="url(#hatch-blue)"/>
        <path d="M183 168h5v47h-5zM170 225h83v4h-83zM417 229h10v41h-10z" fill="#f0f000"/>
        <path d="M414 285h15v89h-15z" fill="#b4b4b4"/>
        <path d="M277 374h138v10H277zM1078 435h165v37h-165z" fill="#f0f0f0"/>
        <g fill="#7800f0">
          <path d="M248 277h19v15h-19zM417 269h10v10h10v10h-20zM243 372h34v13h-34zM415 374h24v25h-11v15h-13zM581 279h10v10h-10zM658 278h5v12h-5zM909 279h10v10h-10zM1071 277l15 15h-15zM1034 433h10v40h-10zM904 209h21v21h-21zM1068 214h21v16h-21zM178 219h10v10h-10z"/>
        </g>
        <path d="M253 215h19v14h-19zM412 215h20v14h-20zM1069 215h19v14h-19zM1233 215h20v14h-20z" fill="#00f0f0"/>
        <path d="M576 215h20v19h-20zM581 443h20v20h-20zM905 210h19v19h-19zM899 443h20v20h-20z" fill="#0078f0"/>
        <!-- slab outlines and span arrows -->
        <g class="ln white">
          <path d="M170 223.500h1196M259.500 168v56M511.500 225v248M988.500 225v248M512 283.500h476M586 225v58M913 225v58M591 447.500h318" />
          <path d="M750 285L566 473M750 285l185 188M750 308v165" stroke-width="2"/>
        </g>
        <g class="ln white bold">
          <path d="M520 254h59M525 249l-5 5 5 6M922 254h59M976 249l5 5-5 6M530 345h143M827 345h143M750 308v165"/>
        </g>
        <path class="ln white" d="M544 331l-14 14 14 13M956 331l14 14-14 13"/>
        <g class="ln axis-dark">
          <path d="M240.500 168v285M260.500 168v285M274.500 168v285M404.500 168v285M419.500 168v285M439.500 168v285M512.500 168v285M548.500 168v285M660.500 168v285M987.500 168v285M1038.500 168v285M1267.500 168v285M170 378.500h1196M170 416.500h1196M471 169l303 303"/>
        </g>
        <!-- rebar -->
        <g class="ln yellow">
          <path d="M256 170h1110M170 180h87M361 175h-5v48h5M449 170v54M521 175h-5v48h5M641 170v54M671 175h-5v108h5M846 175h-5v108h5M989 175h-5v48h5M1149 175h-5v48h5M1308 175h-5v48h5"/>
          <path d="M730 248v-4h40v4M537 225v58M512 264h73M534 262v-5h72v5M611 285v141h-99M710 325v148M592 446h318M850 285v100M894 426h94M939 225v58M915 264h73M894 264v-5h72v5"/>
        </g>
        <g class="ln magenta">
          <path d="M203 168v55h5M512 244h75v4M561 224v59h5M656 283h-5v107M512 385h144M671 370v-5h158v5M796 325h-5v148M849 389v-4h139M894 283h-5v143h5M913 248v-4h75M968 224h-5v59h5M1024 168v55h5M1215 168v55h5M750 448v10"/>
        </g>
        <g class="ln axis-red">
          <path d="M170 224.500h1196M170 284.500h1196M170 453.500h1196M257.500 168v285M421.500 168v285M585.500 168v285M914.500 168v285M1078.500 168v285M1242.500 168v285"/>
        </g>
        <g class="bubble">
          <circle cx="183" cy="224" r="12.500"/><circle cx="183" cy="284" r="12.500"/><circle cx="183" cy="453" r="12.500"/>
          <circle cx="258" cy="181" r="12.500"/><circle cx="422" cy="181" r="12.500"/><circle cx="586" cy="181" r="12.500"/>
          <circle cx="914" cy="181" r="12.500"/><circle cx="1078" cy="181" r="12.500"/><circle cx="1242" cy="181" r="12.500"/>
          <path d="M635.500 269v26M611 308l22 22M633 290c-8 6-12 16-12 28"/>
        </g>
        <g class="axis-label">
          <text x="183" y="290">A</text><text x="183" y="459">A1</text><text x="634" y="301">45°</text>
        </g>
        <g class="axis-label faint">
          <text x="183" y="229">B</text><text x="258" y="186">2</text><text x="422" y="186">3</text><text x="586" y="186">4</text>
          <text x="914" y="186">5</text><text x="1078" y="186">6</text><text x="1242" y="186">7</text>
        </g>
        <path d="M223 423v-39h-2l4-10 4 10h-2v39z" fill="#0f0"/>
        <path d="M225 421h37v-3l13 5-13 5v-3h-37z" fill="#f00"/>
        <path d="M234 377l5 4 5-4M239 381v5" fill="none" stroke="#0f0"/>
        <path d="M262 402l9 9M271 402l-9 9" stroke="#f00"/>
      </svg>

      <div class="toolbar-row snap-row">
        <div class="bar">
          <i class="grip"></i>
          <button class="tool"><svg class="ic"><use href="#ortho"/></svg>正交</button>
          <button class="tool on"><svg class="ic"><use href="#snap"/></svg>对象捕捉</button>
          <button class="tool on"><svg class="ic"><use href="#dyn"/></svg>动态输入</button>
        </div>
        <div class="bar">
          <i class="grip"></i>
          <button class="tool"><svg class="ic"><use href="#cross"/></svg>交点</button>
          <button class="tool on"><svg class="ic"><use href="#perp"/></svg>垂点</button>
          <button class="tool on"><svg class="ic"><use href="#mid"/></svg>中点</button>
          <button class="tool"><svg class="ic"><use href="#penta"/></svg>顶点</button>
          <button class="tool"><svg class="ic"><use href="#coord"/></svg>坐标</button>
        </div>
        <div class="bar offset-bar">
          <i class="grip"></i>
          <select class="combo w-floor" aria-label="偏移方式"><option>不偏移</option></select>
          <i class="sep"></i>
          <label>X=<input class="num" type="text" value="0" disabled>mm</label>
          <label>Y=<input class="num" type="text" value="0" disabled>mm</label>
          <i class="sep"></i>
          <label class="rot"><input type="checkbox" disabled>旋转</label>
          <input class="num wide" type="text" value="0.000" aria-label="旋转角度" disabled><span class="deg">°</span>
        </div>
      </div>

      <section class="rebar-panel">
        <div class="panel-edge">
          <button aria-label="关闭面板"><svg viewBox="0 0 11 11"><rect x=".5" y=".5" width="10" height="10" fill="#ddd" stroke="#555"/><path d="M2 2l7 7M9 2L2 9" stroke="#444" stroke-width="2"/></svg></button>
          <div class="dots"></div>
        </div>
        <div class="panel-body">
          <div class="bar panel-tools">
            <button class="tool nav" aria-label="首条" disabled><svg class="ic"><use href="#first"/></svg></button>
            <button class="tool nav" aria-label="上一条" disabled><svg class="ic"><use href="#prev"/></svg></button>
            <button class="tool nav" aria-label="下一条"><svg class="ic"><use href="#next"/></svg></button>
            <button class="tool nav" aria-label="末条"><svg class="ic"><use href="#last"/></svg></button>
            <i class="sep"></i>
            <button class="tool nav" aria-label="上移" disabled><svg class="ic"><use href="#up"/></svg></button>
            <button class="tool nav" aria-label="下移" disabled><svg class="ic"><use href="#down"/></svg></button>
            <i class="sep"></i>
            <button class="tool" disabled><svg class="ic"><use href="#row-ins"/></svg>插入</button>
            <button class="tool" disabled><svg class="ic"><use href="#row-del"/></svg>删除</button>
            <button class="tool" disabled><svg class="ic"><use href="#scale"/></svg>缩尺配筋</button>
            <button class="tool"><svg class="ic"><use href="#info"/></svg>钢筋信息</button>
            <button class="tool"><svg class="ic"><use href="#gallery"/></svg>钢筋图库</button>
            <button class="tool"><svg class="ic"><use href="#other"/></svg>其他<svg class="caret"><use href="#caret"/></svg></button>
            <button class="tool">关闭</button>
            <i class="sep"></i>
            <span class="total">单构件钢筋总重(kg)：23.226</span>
          </div>
          <div class="grid-wrap">
            <table class="grid">
              <colgroup>
                <col class="c32"><col class="c74"><col class="c56"><col class="c36"><col class="c33"><col class="c201"><col class="c165"><col class="c156"><col class="c61"><col class="c38"><col class="c39"><col class="c50"><col class="c62"><col class="c61"><col class="c70"><col class="c62">
              </colgroup>
              <thead>
                <tr><th></th><th class="active">筋号</th><th>直径(mm)</th><th>级别</th><th>图号</th><th>图形</th><th>计算公式</th><th>公式描述</th><th>长度(mm)</th><th>根数</th><th>搭接</th><th>损耗(%)</th><th>单重(kg)</th><th>总重(kg)</th><th>钢筋归类</th><th>搭接形式</th></tr>
              </thead>
              <tbody>
                <tr class="current">
                  <th>1*</th><td class="name">马凳筋.1</td><td>8</td>
                  <td class="grade"><svg viewBox="0 0 12 12"><circle cx="6" cy="5.500" r="3.500"/><path d="M4.500 1v9M7.500 1v9M1 10.500h10"/></svg></td>
                  <td>521</td>
                  <td class="shape">
                    <svg viewBox="0 0 200 40">
                      <g fill="none" stroke="#000"><path d="M64 21L126 2M61 17l5 8M123 1l4 8M120 14v12M117 14h6"/><path d="M65 25L125 9M83 20v14M109 13v12M74 34h18M101 26h22" stroke-width="2"/><path d="M75 37h16"/></g>
                      <path d="M64 21l7-4v4zM126 2l-8 1 2 3zM120 14l2 4h-4zM120 26l2-4h-4z"/>
                      <text x="68" y="10">1000</text><text x="125" y="25">90</text><text x="91" y="38">250</text>
                    </svg>
                  </td>
                  <td>1000+2*90+2*250</td><td>L1+2*L2+2*L3</td><td>1680</td><td>35</td><td>0</td><td>0</td><td>0.664</td><td>23.226</td><td class="zh">马凳筋</td><td class="zh">绑扎</td>
                </tr>
                <tr><th>2</th><td></td><td></td><td></td><td></td><td></td><td></td><td></td><td></td><td></td><td></td><td></td><td></td><td></td><td></td><td></td></tr>
              </tbody>
            </table>
          </div>
          <div class="hscroll grid-hscroll">
            <button aria-label="向左"><svg class="chev"><use href="#chev-l"/></svg></button>
            <div class="track"><div class="thumb"></div></div>
            <button aria-label="向右"><svg class="chev"><use href="#chev-r"/></svg></button>
          </div>
        </div>
      </section>
    </main>
  </div>

  <footer class="statusbar">
    <span class="s-pos">X=2375 Y=5524</span>
    <span class="s-height">层高:4.5m</span>
    <span class="s-base">底标高:-0.03m</span>
    <span class="s-count">1(6)</span>
    <span class="s-hint">按鼠标左键选择一个图元，按右键中止或ESC取消</span>
    <span class="s-fps">582.6 FPS</span>
  </footer>

  <div class="taskbar">
    <button class="start" aria-label="开始"><svg viewBox="0 0 16 16"><path d="M0 2l7-1v6.500H0zM8 1l8-1v7.500H8zM0 8.500h7V15l-7-1zM8 8.500h8V16l-8-1z" fill="#fff"/></svg></button>
    <label class="search">
      <svg class="cortana" viewBox="0 0 22 22"><circle cx="11" cy="11" r="9" fill="none" stroke="#fff" stroke-width="3"/></svg>
      <input type="text" placeholder="在这里输入你要搜索的内容" aria-label="搜索">
      <svg class="mic" viewBox="0 0 12 20"><path d="M3 2h6v10H3zM1 9v5h10V9M6 14v4M3 18.500h6" fill="none" stroke="#aaa"/></svg>
    </label>
    <div class="task-left">
      <button aria-label="任务视图"><svg viewBox="0 0 24 24"><path d="M6 4.500h12v15H6zM4 6.500H2.500v11H4M20 6.500h1.500v11H20" fill="none" stroke="#fff" stroke-width="1.300"/></svg></button>
      <button aria-label="驱动"><svg viewBox="0 0 24 24"><g fill="#ddd"><path d="M12 12C6 12 2 9 2 5s5-5 8-2c3 2 3 5 2 9z"/><path d="M12 12c0-6 3-10 7-10s5 5 2 8c-2 3-5 3-9 2z"/><path d="M12 12c6 0 10 3 10 7s-5 5-8 2c-3-2-3-5-2-9z"/><path d="M12 12c0 6-3 10-7 10s-5-5-2-8c2-3 5-3 9-2z"/></g><path d="M12 12C9 9 9 5 12 2M12 12c3-3 7-3 10 0M12 12c3 3 3 7 0 10M12 12c-3 3-7 3-10 0" fill="none" stroke="#001010"/></svg></button>
      <button aria-label="助手"><svg viewBox="0 0 24 24"><path d="M19 4C12 0 4 5 4 12s6 11 12 8c5-3 4-9-1-9-4 0-4 5 0 5M18 6c-6-3-11 1-11 6 0 4 4 7 8 5" fill="none" stroke="#ccc" stroke-width="1.500"/></svg></button>
    </div>
    <div class="task-apps">
      <button aria-label="Edge"><svg viewBox="0 0 24 24"><path d="M2 11C3 5 7 1 13 1c6 0 10 5 9 12H8c0 6 8 7 13 4v5c-9 4-18 0-17-8 0-4 3-6 6-7-2 2-2 3-2 4h8c0-8-9-7-14 0z" fill="#0078d7"/></svg></button>
      <button aria-label="应用商店"><svg viewBox="0 0 24 24"><path d="M2 7l20-1v17l-20-2z" fill="#fff"/><path d="M8 7c0-7 8-7 8 0" fill="none" stroke="#fff" stroke-width="1.500"/><path d="M7 10h4v4H7zM12 10h5v4h-5zM7 15h4v4H7zM12 15h5v4h-5z" fill="#001010"/></svg></button>
      <button aria-label="文件资源管理器"><svg viewBox="0 0 24 24"><path d="M1 3h9l2 2h11v16H1z" fill="#ffd96b"/><path d="M1 8h22v13H1z" fill="#ffeaa0"/><path d="M5 21v-8h14v8h-4v-4H9v4z" fill="#38b0e8"/></svg></button>
      <button aria-label="Internet Explorer"><svg viewBox="0 0 24 24"><path d="M12 3a9 9 0 0 1 9 10H8c0 5 6 6 8 3h5C17 25 3 23 3 12c0-5 4-9 9-9zM8 10h8c-1-4-7-4-8 0z" fill="#3aa4e8"/><path d="M3 21c-5-3 7-20 18-19 2 1 1 4 0 5M3 21c2 1 5 0 7-2" fill="none" stroke="#fc3" stroke-width="1.800"/></svg></button>
      <button aria-label="淘宝红包"><svg viewBox="0 0 24 24"><rect width="24" height="24" rx="5" fill="#e8261c"/><circle cx="12" cy="9" r="8" fill="#ffcf3c"/><text x="12" y="13" font-size="12" fill="#e8261c">淘</text><text x="12" y="23" font-size="7" fill="#ffcf3c">红包</text></svg></button>
      <button class="active run" aria-label="GGJ2013"><svg><use href="#logo"/></svg></button>
      <button class="run" aria-label="记事"><svg viewBox="0 0 24 24"><rect width="24" height="24" rx="3" fill="#f5a11d"/><path d="M4 4h13v16H4z" fill="#fff"/><path d="M6 8h8M6 11h7M6 14h8M6 17h6" stroke="#a86" /><path d="M11 14l8-11 3 2-8 11-4 2z" fill="#704020"/></svg></button>
      <button class="run" aria-label="广联达"><svg viewBox="0 0 24 24"><path d="M22 4C12-2 1 3 1 12c0 6 4 11 10 11 5 0 11-4 11-12H12c5 2 3 7-1 6-6-2-3-13 11-13z" fill="#0b8cf0"/></svg></button>
      <button class="run" aria-label="360浏览器"><svg viewBox="0 0 24 24"><circle cx="12" cy="12" r="11" fill="#5cc22e"/><path d="M18 17c-6 4-12 0-11-5s10-5 10 0H8M3 20C8 19 20 9 20 2" fill="none" stroke="#fff" stroke-width="2.200"/></svg></button>
    </div>
    <div class="cpu"><span>77%</span><span>CPU使用</span></div>
    <div class="tray">
      <button aria-label="显示隐藏图标"><svg viewBox="0 0 16 16"><path d="M2 11l6-6 6 6"/></svg></button>
      <button aria-label="电源"><svg viewBox="0 0 16 16"><path d="M5 5h10v7H5zM1 4h4M2 1v3M4 1v3M3 5v4h2"/><path d="M7 7h6v3H7z" fill="#fff"/></svg></button>
      <button aria-label="网络"><svg viewBox="0 0 16 16"><path d="M2 14C3 7 7 3 14 2M5 14c1-5 4-8 9-9M8 14c1-3 3-5 6-6M11 14l3-3"/></svg></button>
      <button aria-label="音量"><svg viewBox="0 0 16 16"><path d="M1 6h3l3-3v10l-3-3H1zM9 6c1 1 1 3 0 4M11 4c2 2 2 6 0 8M13 2c3 3 3 9 0 12"/></svg></button>
      <button class="kbd" aria-label="触摸键盘"><svg viewBox="0 0 24 16"><path d="M1 2h22v12H1zM4 5h16M4 8h16M6 11h12"/></svg></button>
      <button class="ime">中</button>
      <button aria-label="搜狗输入法"><svg class="sg"><use href="#sogou"/></svg></button>
    </div>
    <div class="clock"><time>18:23</time><span>2017/10/20</span></div>
    <button class="notice" aria-label="通知中心"><svg viewBox="0 0 26 28"><path d="M1 2h17v13H8l-3 4v-4H1z" fill="#fff"/><path d="M4 6h11M4 9h11M4 12h8" stroke="#000"/><circle cx="17" cy="18" r="8" fill="#444" stroke="#999"/><text x="17" y="22" font-size="11" fill="#fff">2</text></svg></button>
  </div>

  <!-- floating widgets -->
  <div class="ime-bar">
    <svg class="s-logo"><use href="#sogou"/></svg>
    <span>英</span>
    <svg viewBox="0 0 16 16"><circle cx="4" cy="5" r="2"/><path d="M10 9h3v3l-3 3z"/></svg>
    <svg viewBox="0 0 16 16"><rect x="5" y="0" width="6" height="10" rx="3"/><path d="M3 6c0 9 10 9 10 0M8 12v4M5 15h6" fill="none" stroke="#1e6fc8" stroke-width="1.500"/></svg>
    <svg viewBox="0 0 16 16"><rect y="2" width="16" height="12" rx="1"/><path d="M2 5h12M2 8h12M4 11h8" stroke="#fff" stroke-width="1.500" stroke-dasharray="2 1"/></svg>
    <svg class="dim" viewBox="0 0 16 16"><circle cx="6" cy="4" r="3.500"/><path d="M0 15c0-9 10-9 11-3v3z"/><path d="M8 9h8v6H8z" stroke="#fff"/></svg>
    <svg viewBox="0 0 16 16"><path d="M5 1c1 2 5 2 6 0l5 3-2 4-2-1v8H4V7L2 8 0 4z"/></svg>
    <svg viewBox="0 0 16 16"><path d="M15 4l-3 2-2-2 1-3C7 0 5 4 6 7l-6 6 3 3 6-6c4 1 7-2 6-6z"/></svg>
  </div>
  <div class="speed-ball">
    <strong>70%</strong>
    <div class="rates"><span><i class="rate-up">↑</i>0K/s</span><span><i class="rate-down">↓</i>0K/s</span></div>
    <svg viewBox="0 0 20 20"><circle cx="9" cy="11" r="8.500" fill="#2f7fe0"/><path d="M9 6.500v9M4.500 11h9" stroke="#fff" stroke-width="2"/><circle cx="15" cy="5" r="4" fill="#e0282c"/></svg>
  </div>
  <div class="mark mark-edit"></div>
  <div class="mark mark-tree"></div>
  <div class="mark mark-shape"></div>

</body>
</html>
```
FILE: styles.css
```css
:root {
  --face: #f0f0f0;
  --line: #a0a0a0;
  --hot: #3399ff;
  --hot-bg: #e5f1fb;
  --ui: "Noto Sans", "Noto Sans CJK SC", sans-serif;
  --song: "Liberation Serif", "Noto Sans CJK SC", serif;
  --mono: "Liberation Mono", "Noto Sans CJK SC", monospace;
}

* {
  box-sizing: border-box;
  margin: 0;
  padding: 0;
}

body {
  display: flex;
  flex-direction: column;
  height: 100vh;
  overflow: hidden;
  background: var(--face);
  color: #000;
  font: 12px/16px var(--ui);
}

button {
  background: none;
  border: none;
  color: inherit;
  font: inherit;
}

button, label, span {
  white-space: nowrap;
}

a {
  color: inherit;
  text-decoration: none;
}

svg {
  flex: none;
}

.sprite {
  position: absolute;
  width: 0;
  height: 0;
}

.ic {
  width: 16px;
  height: 16px;
}

.caret {
  width: 7px;
  height: 4px;
  margin-left: 2px;
}

.chev {
  width: 9px;
  height: 9px;
}

/* title + menu */
.titlebar {
  display: flex;
  align-items: center;
  flex: none;
  height: 23px;
  padding: 0 2px;
  gap: 9px;
  background: #fff;
}

.titlebar h1 {
  flex: 1;
  font-size: 12px;
  font-weight: normal;
  white-space: nowrap;
}

.win-buttons {
  display: flex;
}

.win-buttons button {
  width: 46px;
  height: 20px;
}

.win-buttons svg {
  width: 12px;
  height: 12px;
  fill: none;
  stroke: #000;
}

.menubar {
  display: flex;
  align-items: center;
  flex: none;
  height: 31px;
}

.menus {
  display: flex;
  gap: 11px;
  padding: 0 7px;
}

.news {
  flex: 1;
  margin-left: 4px;
  padding: 5px 0 5px 28px;
  background: #f6f6f6;
  color: #1c7272;
  font-family: var(--song);
}

.account {
  display: flex;
  align-items: center;
  width: 240px;
  height: 28px;
  background: linear-gradient(#fbfbfb, #efefef);
}

.more {
  align-self: flex-start;
  margin-left: auto;
  padding: 1px 4px 0 0;
  font-size: 14px;
  font-weight: bold;
  line-height: 12px;
}

/* toolbars */
.toolbar-row {
  display: flex;
  flex: none;
  gap: 3px;
  height: 28px;
}

.top-tools {
  height: 30px;
  padding-bottom: 2px;
}

.bar {
  display: flex;
  align-items: center;
  padding-left: 3px;
  background: linear-gradient(#fdfdfd, #ededed);
  border-radius: 0 3px 3px 0;
}

.bar-file {
  width: 149px;
  padding-left: 0;
}

.bar-main {
  width: 550px;
  padding-left: 1px;
}

.bar-view {
  flex: 1;
  padding-left: 2px;
}

.bar-end {
  width: 30px;
  margin-left: auto;
}

.tool {
  display: flex;
  align-items: center;
  gap: 3px;
  height: 24px;
  padding: 0 4px;
}

.tool:hover {
  background: var(--hot-bg);
}

.tool:disabled {
  color: #9a9a9a;
}

.tool.on {
  padding: 0 3px;
  border: 1px solid var(--hot);
  background: var(--hot-bg);
}

.drop {
  display: flex;
  align-items: center;
  width: 11px;
  height: 24px;
}

.sep {
  width: 1px;
  height: 14px;
  margin: 0 2px 0 3px;
  background: #b4b4b4;
}

.sep.tall {
  height: 24px;
}

.grip {
  width: 4px;
  height: 16px;
  background: radial-gradient(circle at 1px 1px, #aaa 1px, transparent 2px) 0 0 / 4px 4px;
}

.combo {
  appearance: none;
  width: 70px;
  height: 23px;
  margin-right: 2px;
  padding: 0 3px;
  border: none;
  background: #fff url("data:image/svg+xml,%3Csvg xmlns='http://www.w3.org/2000/svg' width='7' height='4'%3E%3Cpath d='M0 0h7L3.500 4z'/%3E%3C/svg%3E") no-repeat right 3px center;
  color: #000;
  font: 12px/16px var(--ui);
}

.w-floor {
  width: 58px;
}

.w-arc {
  width: 54px;
}

.w-dim {
  width: 44px;
  margin: 0;
}

.combo-icon {
  display: flex;
  align-items: center;
}

/* workspace */
.workspace {
  display: flex;
  flex: 1;
  min-height: 0;
}

.sidebar {
  display: flex;
  flex-direction: column;
  flex: none;
  width: 166px;
  padding-bottom: 1px;
  font-family: var(--song);
}

.side-title {
  display: flex;
  align-items: center;
  height: 16px;
  background: #0054e3;
  color: #fff;
}

.side-title h2 {
  flex: 1;
  font-size: 13px;
  font-weight: normal;
}

.side-title button {
  width: 18px;
  height: 16px;
  line-height: 10px;
}

.side-title svg {
  width: 10px;
  height: 10px;
  fill: none;
  stroke: #fff;
}

.side-btn {
  flex: none;
  height: 22px;
  margin-right: 1px;
  border: 1px solid var(--line);
  border-top-color: #fff;
}

.tree-tools {
  display: flex;
  gap: 4px;
  height: 27px;
  margin: 1px 2px 0;
  padding: 4px 4px 0;
  background: linear-gradient(#f2f2f2, #fdfdfd);
  border: 1px solid #bbb;
  border-bottom: none;
}

.tree-tools svg {
  width: 18px;
  height: 16px;
  fill: none;
  stroke: #00604c;
  stroke-width: 2;
}

.tree-box {
  display: flex;
  flex-direction: column;
  flex: 1;
  min-height: 0;
  margin: 0 2px 1px;
  padding: 1px 1px 2px;
  border: 1px solid #828790;
}

.tree-main {
  display: flex;
  flex: 1;
  min-height: 0;
}

.tree {
  flex: 1;
  overflow: hidden;
  background: #fff;
  list-style: none;
}

.group {
  display: flex;
  align-items: center;
  height: 16px;
  padding-left: 6px;
}

.group .ic {
  margin: 0 5px 0 7px;
}

.tree ul {
  list-style: none;
  padding-left: 31px;
  background:
    repeating-linear-gradient(#999 0 1px, transparent 1px 2px) 11px 0 / 1px 100% no-repeat,
    repeating-linear-gradient(#999 0 1px, transparent 1px 2px) 31px 0 / 1px 100% no-repeat;
}

.tree ul li {
  display: flex;
  align-items: center;
  height: 16px;
}

.tree ul li::before {
  content: "";
  flex: none;
  width: 8px;
  margin-right: 3px;
  border-top: 1px dotted #999;
}

.tree ul a {
  padding: 0 4px;
  white-space: nowrap;
}

.tree .selected .ic,
.tree .selected a {
  background: #d9d9d9;
}

.tree .book {
  width: 13px;
  height: 14px;
  margin-left: -2px;
}

.vscroll {
  display: flex;
  flex-direction: column;
  width: 16px;
}

.vscroll button,
.hscroll button {
  width: 16px;
  height: 16px;
  line-height: 9px;
}

.vscroll .track {
  flex: 1;
  padding-top: 171px;
}

.thumb {
  background: #cdcdcd;
}

.vscroll .thumb {
  height: 246px;
}

.hscroll {
  display: flex;
  height: 16px;
}

.hscroll .track {
  flex: 1;
}

.hscroll .thumb {
  height: 16px;
}

.tree-hscroll {
  padding-right: 16px;
}

.tree-hscroll .thumb {
  width: 92%;
}

.main {
  display: flex;
  flex-direction: column;
  flex: 1;
  min-width: 0;
  margin-left: 4px;
}

/* drawing area */
.drawing {
  flex: 1;
  width: 100%;
  min-height: 0;
  background: #000;
  shape-rendering: crispEdges;
}

.ln {
  fill: none;
  stroke-width: 2;
}

.white { stroke: #fff; stroke-width: 1; }
.bold { stroke-width: 2; }
.yellow { stroke: #ff0; }
.magenta { stroke: #f0f; }
.axis-red { stroke: #f00; stroke-width: 1; }
.axis-dark { stroke: #800000; stroke-width: 1; }

.bubble {
  fill: none;
  stroke: #008000;
}

.axis-label {
  fill: #d8d8d8;
  font: 14px "Liberation Sans", sans-serif;
  text-anchor: middle;
}

.axis-label.faint {
  fill: #b060b0;
  font-weight: bold;
}

/* snap bar */
.snap-row {
  height: 32px;
  padding: 1px 0 3px;
  gap: 2px;
}

.snap-row .sep {
  height: 18px;
}

.offset-bar {
  padding-right: 6px;
  color: #777;
}

.offset-bar label {
  display: flex;
  align-items: center;
  gap: 3px;
  margin-right: 4px;
}

.offset-bar .rot {
  gap: 9px;
  color: #000;
}

.rot input {
  appearance: none;
  width: 11px;
  height: 11px;
  border: 1px solid #888;
}

.num {
  width: 58px;
  height: 23px;
  padding-right: 17px;
  border: 1px solid #7a7a7a;
  background: var(--face) url("data:image/svg+xml,%3Csvg xmlns='http://www.w3.org/2000/svg' width='7' height='15'%3E%3Cpath d='M0 4h7L3.500 0zM0 11h7l-3.500 4z' fill='%23666'/%3E%3C/svg%3E") no-repeat right 4px center;
  color: #888;
  font: 12px/16px var(--ui);
  text-align: right;
}

.num.wide {
  width: 68px;
}

.deg {
  padding-left: 2px;
}

/* rebar editor */
.rebar-panel {
  display: flex;
  flex: none;
  height: 201px;
  padding-bottom: 1px;
}

.panel-edge {
  display: flex;
  flex-direction: column;
  width: 13px;
  padding: 2px 1px 0;
}

.panel-edge button {
  height: 13px;
  line-height: 11px;
  text-align: left;
}

.panel-edge svg {
  width: 11px;
  height: 11px;
}

.dots {
  flex: 1;
  width: 10px;
  background: radial-gradient(circle at 2px 2px, #b8b8b8 1px, transparent 2px) 0 0 / 5px 5px;
}

.panel-body {
  display: flex;
  flex-direction: column;
  flex: 1;
  min-width: 0;
}

.panel-tools {
  height: 28px;
  padding-left: 0;
}

.nav {
  padding: 0 4px 0 3px;
}

.panel-tools .nav:disabled {
  color: #c4c4c4;
}

.total {
  margin-left: 4px;
}

.grid-wrap {
  flex: 1;
  overflow: hidden;
  border: 1px solid var(--line);
  border-bottom: none;
  background: #fff;
}

.grid {
  width: 1196px;
  table-layout: fixed;
  border-collapse: collapse;
  font-family: var(--mono);
}

.c32 { width: 32px; }
.c33 { width: 33px; }
.c36 { width: 36px; }
.c38 { width: 38px; }
.c39 { width: 39px; }
.c50 { width: 50px; }
.c56 { width: 56px; }
.c61 { width: 61px; }
.c62 { width: 62px; }
.c70 { width: 70px; }
.c74 { width: 74px; }
.c156 { width: 156px; }
.c165 { width: 165px; }
.c201 { width: 201px; }

.grid th,
.grid td {
  height: 19px;
  overflow: hidden;
  border-right: 1px solid #c0c0c0;
  border-bottom: 1px solid #c0c0c0;
  font-weight: normal;
  white-space: nowrap;
}

.grid thead th {
  height: 20px;
  background: linear-gradient(#fff, #f0f0f0);
  font-family: var(--song);
  font-size: 12px;
}

.grid thead .active {
  background: linear-gradient(#fbdc9d, #f3b55c);
  color: #701848;
}

.grid tbody th {
  background: #f6f6f6;
  font-size: 10px;
}

.grid td {
  padding-left: 1px;
  font-size: 10px;
}

.grid td:nth-child(2) {
  border-right: 2px solid #000;
}

.grid .current td {
  height: 41px;
  background: #ccffd9;
}

.grid .current th {
  background: #ffd48a;
  color: #701848;
}

.grid .current .name {
  background: #b4f0dc;
  font-family: var(--song);
  font-size: 12px;
}

.grid .zh {
  font-size: 12px;
}

.grade {
  text-align: center;
}

.grade svg {
  width: 12px;
  height: 12px;
  fill: none;
  stroke: #000;
  vertical-align: middle;
}

.shape svg {
  display: block;
  width: 100%;
  height: 40px;
}

.shape text {
  font: 11px "Liberation Sans", sans-serif;
}

.grid-hscroll {
  border-left: 1px solid var(--line);
}

.grid-hscroll .thumb {
  width: 72%;
}

/* status bar */
.statusbar {
  display: flex;
  flex: none;
  gap: 2px;
  height: 22px;
  padding: 2px 0 1px;
  border-top: 1px solid #fff;
  font-family: var(--song);
}

.statusbar span {
  padding: 1px;
  border: 1px solid #d8d8d8;
  border-left: none;
  background: #f6f6f6;
}

.s-pos { width: 148px; }
.s-height { width: 77px; }
.s-base { width: 98px; }
.s-count { width: 48px; }
.s-hint { flex: 1; }
.s-fps { width: 70px; }

.statusbar .s-pos,
.statusbar .s-fps {
  font-family: var(--mono);
  font-size: 10px;
}

/* taskbar */
.taskbar {
  display: flex;
  align-items: center;
  flex: none;
  height: 40px;
  background: #000c0e;
  color: #fff;
}

.taskbar button {
  display: flex;
  align-items: center;
  justify-content: center;
  height: 40px;
}

.taskbar text {
  font-family: "Noto Sans CJK SC", sans-serif;
  text-anchor: middle;
}

.start {
  width: 48px;
  background: #000;
}

.start svg {
  width: 16px;
  height: 16px;
}

.search {
  display: flex;
  align-items: center;
  gap: 5px;
  width: 344px;
  height: 40px;
  padding: 0 14px 0 9px;
  background: #333;
}

.cortana {
  width: 22px;
  height: 22px;
}

.mic {
  width: 12px;
  height: 20px;
}

.search input {
  flex: 1;
  min-width: 0;
  background: none;
  border: none;
  color: #fff;
  font: 14px/20px var(--ui);
}

.search input::placeholder {
  color: #9a9a9a;
}

.task-left {
  display: flex;
  width: 150px;
  margin-right: 2px;
}

.task-left button,
.task-apps button {
  flex: 1;
}

.task-left svg,
.task-apps svg {
  width: 24px;
  height: 24px;
}

.task-apps {
  display: flex;
  gap: 1px;
  width: 428px;
}

.task-apps .run {
  border-bottom: 3px solid #76b9ed;
}

.task-apps .active {
  background: #3a4446;
}

.cpu {
  display: flex;
  flex-direction: column;
  align-items: center;
  margin-left: auto;
  padding-right: 12px;
  color: #f0962c;
}

.tray {
  display: flex;
}

.tray button {
  width: 24px;
}

.tray svg {
  width: 16px;
  height: 16px;
  fill: none;
  stroke: #fff;
}

.tray .sg {
  stroke: none;
}

.tray .kbd {
  width: 32px;
}

.tray .kbd svg {
  width: 24px;
}

.tray .ime {
  font-size: 14px;
}

.tray button:last-child {
  width: 32px;
}

.clock {
  display: flex;
  flex-direction: column;
  align-items: center;
  gap: 3px;
  width: 76px;
}

.notice {
  width: 52px;
}

.notice svg {
  width: 26px;
  height: 28px;
}

/* floating widgets over the window */
.ime-bar {
  position: absolute;
  top: 3px;
  left: 994px;
  display: flex;
  align-items: center;
  gap: 7px;
  width: 180px;
  height: 24px;
  border: 1px solid #a9c4e4;
  background: #fff;
  color: #1e6fc8;
}

.ime-bar span {
  font-size: 14px;
  font-weight: bold;
}

.ime-bar svg {
  width: 15px;
  height: 15px;
  fill: #1e6fc8;
}

.ime-bar .dim {
  fill: #b4c2d6;
}

.ime-bar .s-logo {
  width: 28px;
  height: 28px;
  margin: 0 -1px 3px -6px;
}

.speed-ball {
  position: absolute;
  top: 66px;
  left: 916px;
  display: flex;
  align-items: center;
  gap: 6px;
  width: 127px;
  height: 40px;
  border: 1px solid #aaa;
  border-radius: 20px;
  background: linear-gradient(#f6f6f6, #dedede);
  box-shadow: 1px 2px 4px rgba(0,0,0,0.4);
  font-size: 10px;
}

.speed-ball strong {
  flex: none;
  width: 48px;
  height: 48px;
  border: 2px solid #e4e4e4;
  border-radius: 50%;
  background: linear-gradient(#178a50 0 30%, #46cc60 30%);
  box-shadow: 0 1px 3px rgba(0,0,0,0.6);
  color: #fff;
  font-size: 14px;
  font-weight: normal;
  line-height: 42px;
  text-align: center;
}

.rates {
  flex: 1;
}

.rates span {
  display: flex;
  justify-content: space-between;
  line-height: 15px;
}

.rates i {
  font: bold 12px/15px "DejaVu Sans", sans-serif;
}

.rate-up { color: #e8533c; }
.rate-down { color: #2a9d4c; }

.speed-ball svg {
  width: 20px;
  height: 20px;
  margin-right: 4px;
}

/* red markup */
.mark {
  position: absolute;
  border: 3px solid #f00;
  border-radius: 50%;
  pointer-events: none;
}

.mark-edit {
  top: 92px;
  left: 551px;
  width: 129px;
  height: 60px;
}

.mark-tree {
  top: 206px;
  left: 7px;
  width: 160px;
  height: 79px;
}

.mark-shape {
  top: 506px;
  left: 406px;
  width: 200px;
  height: 126px;
}
```
